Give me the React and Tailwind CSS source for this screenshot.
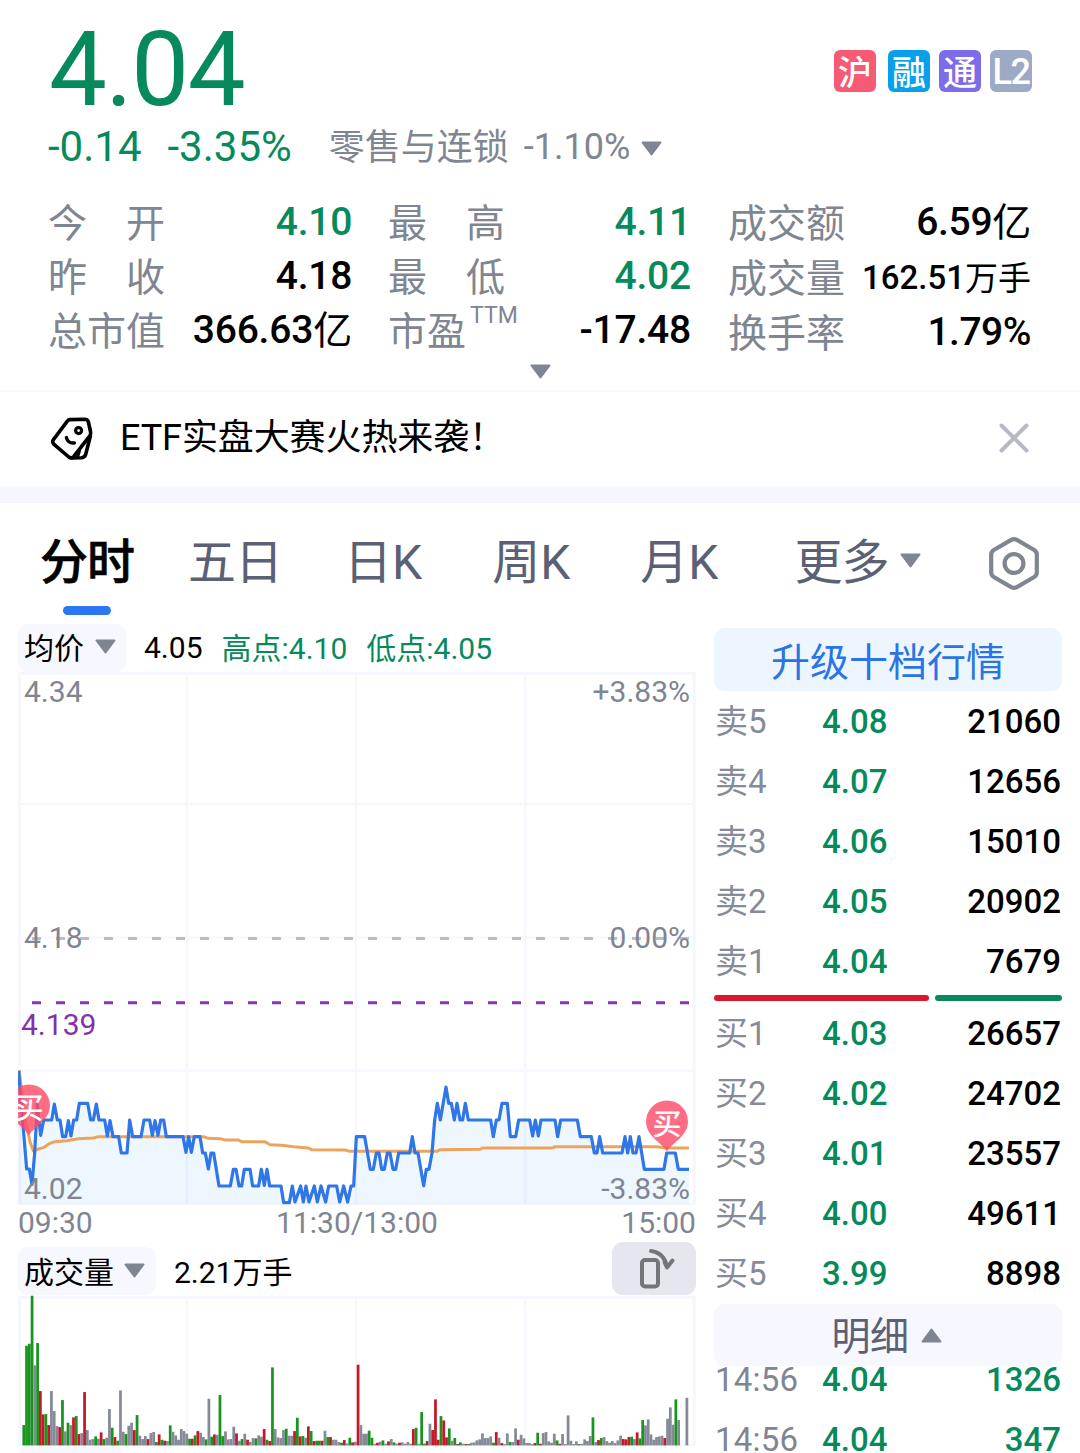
import React from 'react';

const BARS =
  'g61 g299 g305 g449 x240 g307 r163 r93 g94 r61 x163 x103 x58 r55 g136 x42 g68 x61 r84 g88 r34 x37 r160 x46 x17 x19 g27 x20 r39 g19 x23 x109 g53 r25 g14 x165 x41 g34 x59 x68 r46 g91 x29 x19 x28 r19 x37 x40 g10 r33 g17 r14 x13 g60 x41 x30 x17 x49 x43 x35 g20 r20 g30 r43 x38 x25 g18 x140 g26 r33 x32 g151 g28 x42 x18 x19 x56 r36 x14 g19 x35 r17 x10 x22 g21 x30 x26 r49 g17 r13 g234 x49 x24 x22 x46 g50 x29 x29 r43 g83 r27 g28 x23 r57 g43 r13 g14 g14 r14 x44 g25 r25 x17 x17 x10 g8 r16 x6 g23 r9 x11 r242 x61 x35 x35 g44 g23 x5 r8 x11 g15 x5 r12 x19 g9 x5 r8 x9 x5 x10 x5 r49 g53 x5 g100 g5 r13 x65 r46 r138 r17 g88 r75 r24 g51 x14 g22 r4 g9 x5 r4 g4 x8 x9 x15 x18 x36 x22 x22 x27 g8 r40 x23 r7 x4 x36 g10 x10 x51 r17 x32 x21 x7 x7 g3 r7 g38 r5 x37 x40 x12 x8 x35 g15 r5 x34 x4 x90 x14 x4 x12 g4 x5 x18 x13 x28 g84 x10 r16 g22 x25 x13 x8 x13 x7 x15 x29 r19 r18 r25 g26 x19 r39 g21 g76 x60 x78 x33 x17 x25 x27 x29 r22 x80 x114 x62 g138 x76 x0 x0 x143';
const BAR_FILL = { g: '#1a9421', r: '#c41a28', x: '#858a96' };

// Coordinates are in thirds of a pixel
const PRICE =
  '56,62 63,160 72,260 80,357 88,357 96,403 104,309 112,162 122,256 131,210 155,210 163,162 172,210 180,210 188,260 197,260 205,212 213,258 221,210 230,210 238,160 263,160 272,210 280,210 289,162 297,210 314,210 322,258 330,212 339,260 356,260 364,309 381,309 389,210 398,260 423,260 432,210 449,210 457,256 465,212 474,256 482,210 491,210 499,260 549,260 558,307 566,260 574,307 583,260 600,260 608,309 616,309 625,357 633,309 641,309 657,408 691,408 700,358 708,358 717,408 725,408 733,358 750,358 758,408 776,408 784,358 793,406 801,358 809,408 843,408 851,458 868,458 877,408 885,456 902,408 910,456 918,408 927,456 943,408 952,456 963,408 977,456 986,408 1010,408 1019,456 1031,408 1043,456 1053,408 1061,408 1069,260 1094,260 1111,358 1120,358 1129,309 1137,309 1145,358 1153,358 1162,309 1170,309 1179,358 1187,358 1196,309 1229,309 1237,260 1245,309 1254,309 1271,407 1279,358 1287,358 1296,309 1304,210 1312,160 1321,210 1338,111 1346,160 1354,160 1363,210 1371,160 1380,210 1388,210 1396,160 1405,210 1472,210 1480,260 1489,210 1497,210 1506,160 1522,160 1531,260 1547,260 1556,210 1589,210 1598,258 1606,210 1615,258 1623,210 1665,210 1673,260 1682,210 1732,210 1741,260 1774,260 1783,309 1791,309 1799,260 1808,309 1866,309 1875,260 1883,309 1891,260 1899,309 1908,309 1917,260 1933,358 1992,358 2000,309 2026,309 2035,358 2067,358';
const AVERAGE =
  '58,62 68,150 78,220 90,275 100,303 115,297 130,293 150,280 165,275 200,272 235,266 280,264 295,260 610,260 625,265 660,266 675,270 715,270 725,275 795,275 810,284 845,286 880,290 925,294 935,299 1035,300 1050,304 1312,304 1320,299 1440,298 1448,294 1658,294 1665,290 1970,290 2000,294 2067,294';

const STATS = [
  {
    cls: 'w-[304px]',
    row: 'h-[54px] leading-[54px]',
    rows: [
      ['今开', '4.10', '', 'text-[#078a5b] tracking-[-0.3px]'],
      ['昨收', '4.18', '', 'text-black tracking-[-0.3px]'],
      ['总市值', '366.63', '亿', 'text-black tracking-[-0.2px]'],
    ],
  },
  {
    cls: 'w-[303px] ml-[36px]',
    row: 'h-[54px] leading-[54px]',
    rows: [
      ['最高', '4.11', '', 'text-[#078a5b] tracking-[-0.2px]'],
      ['最低', '4.02', '', 'text-[#078a5b] tracking-[-0.2px]'],
      ['市盈', '-17.48', '', 'text-black tracking-[-0.2px]', 'TTM'],
    ],
  },
  {
    cls: 'w-[303px] ml-[37px]',
    row: 'h-[55px] leading-[55px]',
    rows: [
      ['成交额', '6.59', '亿', 'text-black tracking-[-0.3px]'],
      ['成交量', '162.51', '万手', 'text-black text-[33px]'],
      ['换手率', '1.79%', '', 'text-black tracking-[-0.5px]'],
    ],
  },
];

const SELLS = [['卖5', '4.08', '21060'], ['卖4', '4.07', '12656'], ['卖3', '4.06', '15010'], ['卖2', '4.05', '20902'], ['卖1', '4.04', '7679']];
const BUYS = [['买1', '4.03', '26657'], ['买2', '4.02', '24702'], ['买3', '4.01', '23557'], ['买4', '4.00', '49611'], ['买5', '3.99', '8898']];
const TICKS = [['14:56', '4.04', '1326'], ['14:56', '4.04', '347']];

function Caret({ up = false, className = '' }) {
  return (
    <svg width="21" height="15" viewBox="0 0 21 15" className={`shrink-0 ${className}`}>
      <path
        d={up ? 'M1.5 13.5h18L10.5 1.6z' : 'M1.5 1.5h18L10.5 13.4z'}
        fill="#808592"
        stroke="#808592"
        strokeWidth="2"
        strokeLinejoin="round"
      />
    </svg>
  );
}

function Badge({ children, className }) {
  return (
    <span className={`flex h-[42px] w-[42px] items-center justify-center rounded-[6px] font-medium leading-[42px] text-white ${className}`}>
      {children}
    </span>
  );
}

function StatLabel({ text, sup }) {
  if (sup) {
    return (
      <span className="mt-[2px] flex text-[#808592]">
        {text}
        <span className="-mt-[16px] ml-[4px] text-[23px]">{sup}</span>
      </span>
    );
  }
  return (
    <span className="mt-[2px] flex w-[117px] justify-between text-[#808592]">
      {[...text].map((c) => (
        <span key={c}>{c}</span>
      ))}
    </span>
  );
}

function Header() {
  return (
    <header className="h-[392px] border-b-2 border-[#f6f6ff]">
      <div className="flex h-[120px] justify-between pl-[49px] pr-[48px]">
        <div className="pt-[21px] text-[103px] leading-[98px] tracking-[-1.4px] text-[#078a5b]">4.04</div>
        <div className="mt-[50px] flex">
          <Badge className="bg-[#f75a74] font-['Noto_Sans_CJK_SC'] text-[34px]">沪</Badge>
          <Badge className="ml-[12px] bg-[#08a0ec] font-['Noto_Sans_CJK_SC'] text-[34px]">融</Badge>
          <Badge className="ml-[9px] bg-[#7c6cea] font-['Noto_Sans_CJK_SC'] text-[34px]">通</Badge>
          <Badge className="ml-[9px] bg-[#9daac6] pt-[2px] text-[36px] tracking-[-1.5px]">L2</Badge>
        </div>
      </div>
      <div className="flex h-[54px] items-center pl-[48px] text-[42px] leading-[48px] text-[#078a5b]">
        <span>-0.14</span>
        <span className="ml-[26px]">-3.35%</span>
        <span className="ml-[37px] mt-[2px] text-[36px] text-[#808592]">零售与连锁</span>
        <span className="ml-[15px] text-[36px] text-[#808592]">-1.10%</span>
        <Caret className="ml-[11px] mt-[2px]" />
      </div>
      <div className="mt-[21px] flex pl-[48px] text-[39px]">
        {STATS.map((col, i) => (
          <div key={i} className={col.cls}>
            {col.rows.map(([label, value, unit, tone, sup]) => (
              <div key={label} className={`flex justify-between whitespace-nowrap ${col.row}`}>
                <StatLabel text={label} sup={sup} />
                <span className={`font-medium ${tone}`}>
                  {value}
                  {unit && <span className="relative top-px font-normal">{unit}</span>}
                </span>
              </div>
            ))}
          </div>
        ))}
      </div>
      <div className="mt-[4px] flex justify-center">
        <Caret />
      </div>
    </header>
  );
}

function Notice() {
  return (
    <div className="flex h-[111px] items-start border-b-[17px] border-[#f6f6ff] pl-[48px] pr-[48px]">
      <svg width="48" height="48" viewBox="0 0 48 48" fill="none" stroke="#000" strokeWidth="3.6" strokeLinecap="round" strokeLinejoin="round" className="mt-[22px]">
        <path d="M22 5.6 36.6 5.2Q39.6 5.2 40.4 8L42.6 18Q43 20 41.8 21.8L25.6 42.6Q23.4 45 20.8 43L6 30.4Q3.6 28 5.6 25.4L19 7.6Q20.2 5.8 22 5.6Z" />
        <path d="M42.4 22 37.8 40Q37 43.4 33.6 43.8L24 44" />
        <path d="M31.6 36.6 29.6 43" strokeWidth="3" />
        <circle cx="30.6" cy="16.6" r="3" strokeWidth="3.2" />
        <path d="M18.4 23.6Q20 29.6 26.4 29" strokeWidth="3.4" />
      </svg>
      <span className="ml-[24px] mt-[16px] text-[36px] leading-[60px] tracking-[-0.1px] text-black">ETF实盘大赛火热来袭！</span>
      <svg width="32" height="32" viewBox="0 0 32 32" stroke="#b5bac5" strokeWidth="4" strokeLinecap="round" className="ml-auto mr-[2px] mt-[30px]">
        <path d="M3.5 3.5 28.5 28.5M28.5 3.5 3.5 28.5" />
      </svg>
    </div>
  );
}

function Tabs() {
  return (
    <nav className="flex h-[120px] items-start pl-[39px] text-[48px] leading-[70px] text-[#5b6074]">
      <div className="mt-[20px] flex w-[96px] flex-col items-center">
        <span className="font-['Noto_Sans_CJK_SC'] font-medium tracking-[-1px] text-black [-webkit-text-stroke:0.6px_#000]">分时</span>
        <span className="mt-[13px] h-[9px] w-[48px] rounded-full bg-[#2b77f2]" />
      </div>
      <span className="ml-[53px] mt-[25px] tracking-[-1px]">五日</span>
      <span className="ml-[62px] mt-[25px]">日K</span>
      <span className="ml-[70px] mt-[25px]">周K</span>
      <span className="ml-[70px] mt-[25px]">月K</span>
      <span className="ml-[76px] mt-[25px] tracking-[-1px]">更多</span>
      <Caret className="ml-[12px] mt-[50px]" />
      <svg width="56" height="56" viewBox="0 0 56 56" fill="none" stroke="#808592" strokeWidth="4.2" strokeLinejoin="round" className="ml-[65px] mt-[33px]">
        <path d="M25.2 3.9Q28 2.4 30.8 3.9L48.2 14Q50.8 15.6 50.8 18.4V36.6Q50.8 39.4 48.2 41L30.8 51.1Q28 52.6 25.2 51.1L7.8 41Q5.2 39.4 5.2 36.6V18.4Q5.2 15.6 7.8 14Z" />
        <circle cx="28" cy="27.5" r="9.4" />
      </svg>
    </nav>
  );
}

function Pin({ x, y }) {
  return (
    <g transform={`translate(${x} ${y})`}>
      <path d="M0 51C-4 43-21 36-21 21A21 21 0 0 1 21 21C21 36 4 43 0 51Z" fill="#ff4866" fillOpacity="0.8" />
      <text x="0" y="34" textAnchor="middle" fontSize="29" fill="#fff" fontWeight="500" fontFamily='"Noto Sans CJK SC", sans-serif'>
        买
      </text>
    </g>
  );
}

function PriceChart() {
  return (
    <div className="relative h-[534px] text-[30px] leading-[36px] text-[#808592]">
      <svg width="696" height="534" viewBox="0 672 696 534" className="absolute left-0 top-0">
        <defs>
          <clipPath id="plot">
            <rect x="18" y="672" width="678" height="534" />
          </clipPath>
        </defs>
        <g stroke="#f6f6ff" fill="none">
          <path d="M18 673.3H695.5M19.6 672V1205M694.2 672V1205" strokeWidth="3" />
          <path d="M187 672V1204M356 672V1204M525 672V1204M18 804H695M18 937.5H695M18 1070.7H695M18 1204.2H695" strokeWidth="2.2" />
        </g>
        <path d="M32 938.5H690" stroke="#b9bdc7" strokeWidth="3" strokeDasharray="9 15" />
        <path d="M32 1002.8H690" stroke="#8a35b0" strokeWidth="3" strokeDasharray="9 15" />
        <g clipPath="url(#plot)">
          <g transform="translate(0 1050) scale(0.33333)" fill="none" strokeLinejoin="round">
            <polygon points={`56,461 ${PRICE} 2067,461`} fill="#2b86f5" fillOpacity="0.08" />
            <polyline points={AVERAGE} stroke="#eea35c" strokeWidth="9" />
            <polyline points={PRICE} stroke="#2f76e8" strokeWidth="9.6" />
          </g>
          <Pin x={29} y={1084.5} />
          <Pin x={667} y={1100.5} />
        </g>
      </svg>
      <span className="absolute left-[24px] top-[2px]">4.34</span>
      <span className="absolute right-[6px] top-[2px]">+3.83%</span>
      <span className="absolute left-[24px] top-[248px]">4.18</span>
      <span className="absolute right-[6px] top-[248px]">0.00%</span>
      <span className="absolute left-[21px] top-[335px] text-[#8430ab]">4.139</span>
      <span className="absolute left-[24px] top-[499px]">4.02</span>
      <span className="absolute right-[6px] top-[499px]">-3.83%</span>
    </div>
  );
}

function VolumeChart() {
  return (
    <svg width="696" height="152" viewBox="0 1295 696 152" className="block">
      <g stroke="#f6f6ff" fill="none">
        <path d="M18 1297.3H695.5M19.6 1296V1446M694.2 1296V1446" strokeWidth="3" />
        <path d="M187 1296V1446M356 1296V1446M525 1296V1446M18 1445H695" strokeWidth="2.2" />
      </g>
      {BARS.split(' ').map((b, i) => {
        const h = Number(b.slice(1)) / 3;
        return <rect key={i} x={22.4 + i * 2.763} y={1445.4 - h} width="2.763" height={h} fill={BAR_FILL[b[0]]} />;
      })}
    </svg>
  );
}

function ChartColumn() {
  return (
    <section className="w-[696px]">
      <div className="flex h-[49px] items-center pl-[18px] text-[30px] leading-[48px] text-black">
        <span className="flex h-[48px] w-[108px] items-center rounded-[10px] bg-[#f7f7ff] pl-[6px]">
          <span className="mt-[2px]">均价</span>
          <Caret className="ml-[11px] -mt-[2px]" />
        </span>
        <span className="ml-[18px]">4.05</span>
        <span className="ml-[19px] mt-[2px] text-[#078a5b]">高点:4.10</span>
        <span className="ml-[19px] mt-[2px] text-[#078a5b]">低点:4.05</span>
      </div>
      <PriceChart />
      <div className="flex h-[36px] justify-between pl-[18px] text-[30px] leading-[34px] text-[#808592]">
        <span>09:30</span>
        <span>11:30/13:00</span>
        <span>15:00</span>
      </div>
      <div className="flex h-[53px] items-end pl-[18px] text-[30px] leading-[48px] text-black">
        <span className="flex h-[48px] w-[138px] items-center rounded-[10px] bg-[#f7f7ff] pl-[6px]">
          <span className="mt-[3px]">成交量</span>
          <Caret className="ml-[10px] -mt-[2px]" />
        </span>
        <span className="-mb-[2px] ml-[18px]">2.21万手</span>
        <span className="ml-auto flex h-[53px] w-[84px] items-center justify-center rounded-[11px] bg-[#e6e6ef]">
          <svg width="84" height="53" viewBox="612 1242 84 53" fill="none" stroke="#757579" strokeWidth="4" strokeLinecap="round" strokeLinejoin="round">
            <rect x="642" y="1260" width="16" height="26.5" rx="3" />
            <path d="M651 1251Q664 1252.500 667 1267M664.500 1262 667 1267.500 672.500 1260.500" />
          </svg>
        </span>
      </div>
      <VolumeChart />
      <div className="ml-[18px] h-[48px] w-[106px] rounded-[10px] bg-[#f7f7ff]" />
    </section>
  );
}

function BookRow({ row, className, qty = 'text-black', label = 'text-[#868b97]' }) {
  return (
    <div className={`flex text-[33px] ${className}`}>
      <span className={`w-[107px] ${label}`}>{row[0]}</span>
      <span className="font-medium text-[#078a5b]">{row[1]}</span>
      <span className={`ml-auto font-medium ${qty}`}>{row[2]}</span>
    </div>
  );
}

function OrderBook() {
  return (
    <aside className="ml-[18px] w-[348px]">
      <div className="mt-[5px] flex h-[63px] items-center justify-center rounded-[11px] bg-[#edf6ff] pt-[7px] text-[39px] leading-[56px] text-[#2b74e4]">
        升级十档行情
      </div>
      <div className="pl-px pr-px">
        {SELLS.map((r) => (
          <BookRow key={r[0]} row={r} className="h-[60px] leading-[62px]" />
        ))}
      </div>
      <div className="flex h-[12px] items-center gap-[6px] pt-px">
        <span className="h-[6px] w-[215px] rounded-full bg-[#d9182d]" />
        <span className="h-[6px] flex-1 rounded-full bg-[#078a5b]" />
      </div>
      <div className="pl-px pr-px">
        {BUYS.map((r) => (
          <BookRow key={r[0]} row={r} className="h-[60px] leading-[62px]" />
        ))}
      </div>
      <div className="mt-[1px] flex h-[62px] items-center justify-center rounded-[11px] bg-[#f7f7ff] pr-[3px] text-[39px] leading-[58px] text-[#5b6074]">
        <span className="mt-[4px] tracking-[-0.5px]">明细</span>
        <Caret up className="ml-[12px]" />
      </div>
      <div className="flex flex-col gap-[34px] pl-px pr-px">
        {TICKS.map((r) => (
          <BookRow key={r[2]} row={r} className="h-[26px] leading-[28px]" qty="text-[#078a5b]" label="text-[#808592] tracking-[0.2px]" />
        ))}
      </div>
    </aside>
  );
}

export default function App() {
  return (
    <main className="h-[1453px] w-[1080px] overflow-hidden bg-white font-[Roboto,'Noto_Sans_CJK_SC',sans-serif]">
      <Header />
      <Notice />
      <Tabs />
      <div className="flex">
        <ChartColumn />
        <OrderBook />
      </div>
    </main>
  );
}
